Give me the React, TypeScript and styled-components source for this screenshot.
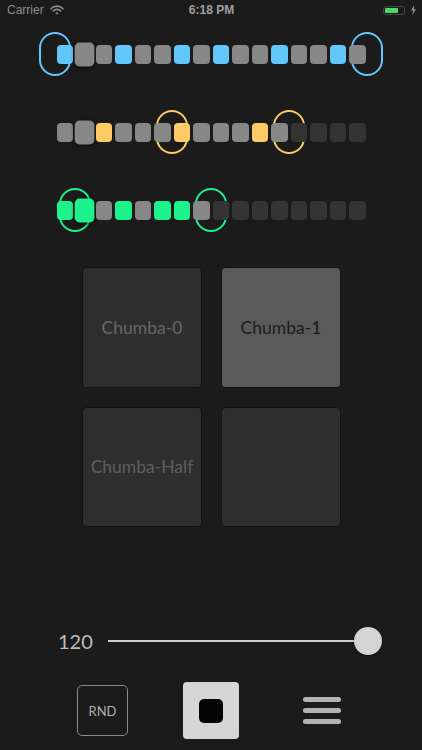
import React from "react";
import styled, { createGlobalStyle } from "styled-components";

const GlobalStyle = createGlobalStyle`
  html, body {
    margin: 0;
    padding: 0;
    background: #1b1b1b;
  }
  body {
    font-family: "Lato", "Liberation Sans", sans-serif;
  }
`;

const STEP_W = 16.5;
const STEP_GAP = 3;

const Screen = styled.div`
  width: 422px;
  height: 750px;
  background: #1b1b1b;
  display: flex;
  flex-direction: column;
  overflow: hidden;
`;

const StatusBar = styled.div`
  height: 20px;
  padding: 0 6px 0 7px;
  display: grid;
  grid-template-columns: 1fr auto 1fr;
  align-items: center;
  font-family: "Liberation Sans", sans-serif;
  font-size: 12px;
  color: #8c8c8c;
`;

const Carrier = styled.div`
  display: flex;
  align-items: center;
  gap: 6px;
`;

const Clock = styled.div`
  font-weight: 700;
  color: #a0a0a0;
`;

const BatteryWrap = styled.div`
  display: flex;
  justify-content: flex-end;
  align-items: center;
  gap: 6px;
`;

const Battery = styled.div`
  width: 22px;
  height: 9px;
  border: 1px solid #444;
  border-radius: 3px;
  padding: 1px;
  box-sizing: border-box;
  display: flex;
`;

const BatteryFill = styled.div`
  width: 70%;
  background: #4cd964;
  border-radius: 1px;
`;

const Sequencer = styled.div`
  padding: 12px 0 0 56.5px;
  display: flex;
  flex-direction: column;
  gap: 34px;
`;

const Track = styled.div`
  position: relative;
  width: ${16 * STEP_W + 15 * STEP_GAP}px;
  height: 44px;
  display: flex;
  align-items: center;
  gap: ${STEP_GAP}px;
`;

const Bracket = styled.div<{ $color: string; $at: number }>`
  position: absolute;
  top: 0;
  left: ${(p) => p.$at - 16}px;
  width: 32px;
  height: 44px;
  box-sizing: border-box;
  border: 2px solid ${(p) => p.$color};
  border-radius: 16px;
  z-index: 0;
`;

const Step = styled.div<{ $fill: string; $big: boolean }>`
  position: relative;
  z-index: 1;
  flex: none;
  width: ${STEP_W}px;
  height: 19px;
  border-radius: 4px;
  background: ${(p) => p.$fill};
  transform: ${(p) => (p.$big ? "scale(1.16, 1.26)" : "none")};
  box-shadow: ${(p) => (p.$big ? "0 1px 3px rgba(0,0,0,0.55)" : "none")};
`;

const Pads = styled.div`
  margin-top: 35px;
  padding-left: 82px;
  display: grid;
  grid-template-columns: 120px 120px;
  grid-auto-rows: 120.5px;
  gap: 19px;
`;

const Pad = styled.div<{ $on?: boolean; $dim?: boolean }>`
  box-sizing: border-box;
  border: 1px solid #121212;
  border-radius: 4px;
  background: ${(p) => (p.$on ? "#5a5a5a" : "#2e2e2e")};
  color: ${(p) => (p.$on ? "#1a1a1a" : p.$dim ? "#5e5e5e" : "#686868")};
  display: flex;
  align-items: center;
  justify-content: center;
  font-size: 17.5px;
`;

const SliderRow = styled.div`
  margin-top: 100px;
  height: 28px;
  padding-left: 58px;
  display: flex;
  align-items: center;
  gap: 16px;
`;

const Tempo = styled.div`
  width: 34px;
  font-size: 20px;
  color: #bdbdbd;
`;

const Slider = styled.div`
  width: 274px;
  display: flex;
  align-items: center;
`;

const Line = styled.div`
  flex: 1;
  height: 2px;
  background: #cfcfcf;
`;

const Thumb = styled.div`
  width: 28px;
  height: 28px;
  margin-left: -14px;
  border-radius: 50%;
  background: #d4d4d4;
  box-shadow: 0 1px 2px rgba(0, 0, 0, 0.4);
`;

const Controls = styled.div`
  margin-top: 27px;
  height: 57px;
  padding-left: 77px;
  display: flex;
  align-items: center;
`;

const RndButton = styled.div`
  width: 51px;
  height: 51px;
  box-sizing: border-box;
  border: 1px solid #8a8a8a;
  border-radius: 5px;
  display: flex;
  align-items: center;
  justify-content: center;
  font-size: 13px;
  color: #b0b0b0;
`;

const StopButton = styled.div`
  margin-left: 55px;
  width: 56px;
  height: 57px;
  border-radius: 4px;
  background: #d6d6d6;
  display: flex;
  align-items: center;
  justify-content: center;
`;

const StopSquare = styled.div`
  width: 24px;
  height: 24px;
  border-radius: 5px;
  background: #050505;
`;

const MenuButton = styled.div`
  margin-left: 64px;
  width: 38px;
  display: flex;
  flex-direction: column;
  gap: 6px;
`;

const MenuLine = styled.div`
  height: 5px;
  border-radius: 2.5px;
  background: #b3b3b3;
`;

type Row = {
  color: string;
  enabled: number;
  active: number[];
  loop: [number, number];
  playhead: number;
};

const rows: Row[] = [
  { color: "#62c7fa", enabled: 16, active: [0, 3, 6, 8, 11, 14], loop: [0, 16], playhead: 1 },
  { color: "#fecb66", enabled: 12, active: [2, 6, 10], loop: [6, 12], playhead: 1 },
  { color: "#1ef28a", enabled: 8, active: [0, 1, 3, 5, 6], loop: [1, 8], playhead: 1 },
];

const boundary = (b: number) => b * (STEP_W + STEP_GAP) - STEP_GAP / 2;

const Wifi = () => (
  <svg width="14" height="10" viewBox="0 0 14 10">
    <path d="M1 3.6a8.6 8.6 0 0 1 12 0" stroke="#8c8c8c" strokeWidth="1.6" fill="none" strokeLinecap="round" />
    <path d="M3.3 5.9a5.3 5.3 0 0 1 7.4 0" stroke="#8c8c8c" strokeWidth="1.6" fill="none" strokeLinecap="round" />
    <path d="M5.4 8.1a2.3 2.3 0 0 1 3.2 0L7 9.7z" fill="#8c8c8c" />
  </svg>
);

const Bolt = () => (
  <svg width="5" height="10" viewBox="0 0 5 10">
    <path d="M3.2 0 0 5.6h2l-.6 4.4L5 4.2H3z" fill="#8a8a8a" />
  </svg>
);

const SeqRow = ({ row }: { row: Row }) => (
  <Track>
    <Bracket $color={row.color} $at={boundary(row.loop[0])} />
    <Bracket $color={row.color} $at={boundary(row.loop[1])} />
    {Array.from({ length: 16 }).map((_, i) => {
      const fill =
        i >= row.enabled ? "#343434" : row.active.includes(i) ? row.color : "#878787";
      return <Step key={i} $fill={fill} $big={i === row.playhead} />;
    })}
  </Track>
);

export default function App() {
  return (
    <Screen>
      <GlobalStyle />
      <StatusBar>
        <Carrier>
          Carrier <Wifi />
        </Carrier>
        <Clock>6:18 PM</Clock>
        <BatteryWrap>
          <Battery>
            <BatteryFill />
          </Battery>
          <Bolt />
        </BatteryWrap>
      </StatusBar>

      <Sequencer>
        {rows.map((r, i) => (
          <SeqRow key={i} row={r} />
        ))}
      </Sequencer>

      <Pads>
        <Pad>Chumba-0</Pad>
        <Pad $on>Chumba-1</Pad>
        <Pad $dim>Chumba-Half</Pad>
        <Pad />
      </Pads>

      <SliderRow>
        <Tempo>120</Tempo>
        <Slider>
          <Line />
          <Thumb />
        </Slider>
      </SliderRow>

      <Controls>
        <RndButton>RND</RndButton>
        <StopButton>
          <StopSquare />
        </StopButton>
        <MenuButton>
          <MenuLine />
          <MenuLine />
          <MenuLine />
        </MenuButton>
      </Controls>
    </Screen>
  );
}
